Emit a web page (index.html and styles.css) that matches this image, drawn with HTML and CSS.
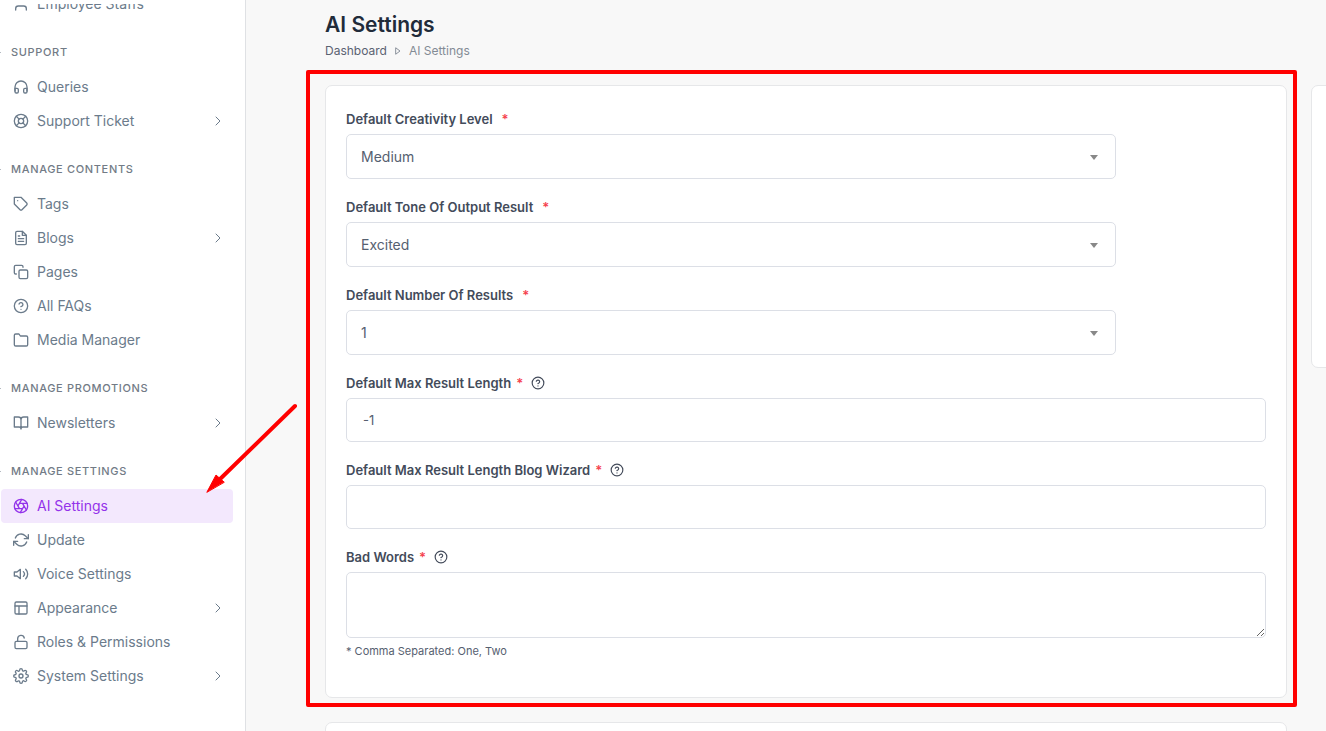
FILE: index.html
```html
<!DOCTYPE html>
<html lang="en">
<head>
<meta charset="utf-8">
<meta name="viewport" content="width=device-width, initial-scale=1">
<title>AI Settings</title>
<link rel="stylesheet" href="styles.css">
</head>
<body>
<svg class="sprite" aria-hidden="true">
  <symbol id="user" viewBox="0 0 24 24"><path d="M20 21v-2a4 4 0 0 0-4-4H8a4 4 0 0 0-4 4v2"/><circle cx="12" cy="7" r="4"/></symbol>
  <symbol id="headphones" viewBox="0 0 24 24"><path d="M3 18v-6a9 9 0 0 1 18 0v6"/><path d="M21 19a2 2 0 0 1-2 2h-1a2 2 0 0 1-2-2v-3a2 2 0 0 1 2-2h3zM3 19a2 2 0 0 0 2 2h1a2 2 0 0 0 2-2v-3a2 2 0 0 0-2-2H3z"/></symbol>
  <symbol id="life-buoy" viewBox="0 0 24 24"><circle cx="12" cy="12" r="10"/><circle cx="12" cy="12" r="4"/><path d="M4.93 4.93l4.24 4.24M14.83 14.83l4.24 4.24M14.83 9.17l4.24-4.24M4.93 19.07l4.24-4.24"/></symbol>
  <symbol id="tag" viewBox="0 0 24 24"><path d="M20.59 13.41l-7.17 7.17a2 2 0 0 1-2.83 0L2 12V2h10l8.59 8.59a2 2 0 0 1 0 2.82z"/><path d="M7 7h.01"/></symbol>
  <symbol id="file-text" viewBox="0 0 24 24"><path d="M14 2H6a2 2 0 0 0-2 2v16a2 2 0 0 0 2 2h12a2 2 0 0 0 2-2V8z"/><path d="M14 2v6h6M16 13H8M16 17H8M10 9H8"/></symbol>
  <symbol id="copy" viewBox="0 0 24 24"><rect x="9" y="9" width="13" height="13" rx="2"/><path d="M5 15H4a2 2 0 0 1-2-2V4a2 2 0 0 1 2-2h9a2 2 0 0 1 2 2v1"/></symbol>
  <symbol id="help" viewBox="0 0 24 24"><circle cx="12" cy="12" r="10"/><path d="M9.09 9a3 3 0 0 1 5.83 1c0 2-3 3-3 3M12 17h.01"/></symbol>
  <symbol id="folder" viewBox="0 0 24 24"><path d="M22 19a2 2 0 0 1-2 2H4a2 2 0 0 1-2-2V5a2 2 0 0 1 2-2h5l2 3h9a2 2 0 0 1 2 2z"/></symbol>
  <symbol id="book-open" viewBox="0 0 24 24"><path d="M2 3h6a4 4 0 0 1 4 4v14a3 3 0 0 0-3-3H2zM22 3h-6a4 4 0 0 0-4 4v14a3 3 0 0 1 3-3h7z"/></symbol>
  <symbol id="aperture" viewBox="0 0 24 24"><circle cx="12" cy="12" r="10"/><path d="M14.31 8l5.74 9.94M9.69 8h11.48M7.38 12l5.74-9.94M9.69 16L3.95 6.06M14.31 16H2.83M16.62 12l-5.74 9.94"/></symbol>
  <symbol id="refresh" viewBox="0 0 24 24"><path d="M23 4v6h-6M1 20v-6h6"/><path d="M3.51 9a9 9 0 0 1 14.85-3.36L23 10M1 14l4.64 4.36A9 9 0 0 0 20.49 15"/></symbol>
  <symbol id="volume" viewBox="0 0 24 24"><path d="M11 5L6 9H2v6h4l5 4z"/><path d="M19.07 4.93a10 10 0 0 1 0 14.14M15.54 8.46a5 5 0 0 1 0 7.07"/></symbol>
  <symbol id="layout" viewBox="0 0 24 24"><rect x="3" y="3" width="18" height="18" rx="2"/><path d="M3 9h18M9 21V9"/></symbol>
  <symbol id="unlock" viewBox="0 0 24 24"><rect x="3" y="11" width="18" height="11" rx="2"/><path d="M7 11V7a5 5 0 0 1 9.9-1"/></symbol>
  <symbol id="settings" viewBox="0 0 24 24"><circle cx="12" cy="12" r="3"/><path d="M19.4 15a1.65 1.65 0 0 0 .33 1.82l.06.06a2 2 0 0 1-2.83 2.83l-.06-.06a1.65 1.65 0 0 0-1.82-.33 1.65 1.65 0 0 0-1 1.51V21a2 2 0 0 1-4 0v-.09A1.65 1.65 0 0 0 9 19.4a1.65 1.65 0 0 0-1.82.33l-.06.06a2 2 0 0 1-2.83-2.83l.06-.06a1.65 1.65 0 0 0 .33-1.82 1.65 1.65 0 0 0-1.51-1H3a2 2 0 0 1 0-4h.09A1.65 1.65 0 0 0 4.6 9a1.65 1.65 0 0 0-.33-1.82l-.06-.06a2 2 0 0 1 2.83-2.83l.06.06a1.65 1.65 0 0 0 1.82.33H9a1.65 1.65 0 0 0 1-1.51V3a2 2 0 0 1 4 0v.09a1.65 1.65 0 0 0 1 1.51 1.65 1.65 0 0 0 1.82-.33l.06-.06a2 2 0 0 1 2.83 2.83l-.06.06a1.65 1.65 0 0 0-.33 1.82V9a1.65 1.65 0 0 0 1.51 1H21a2 2 0 0 1 0 4h-.09a1.65 1.65 0 0 0-1.51 1z"/></symbol>
  <symbol id="chevron" viewBox="0 0 24 24"><path d="M8 4l8 8-8 8"/></symbol>
</svg>

<div class="shell">
  <aside class="sidebar">
    <nav class="nav" aria-label="Main">
      <div class="nav-list">
        <a class="nav-item" href="#"><svg class="icon"><use href="#user"/></svg><span class="nav-text">Employee Staffs</span></a>

        <h2 class="nav-heading">SUPPORT</h2>
        <a class="nav-item" href="#"><svg class="icon"><use href="#headphones"/></svg><span class="nav-text">Queries</span></a>
        <a class="nav-item" href="#"><svg class="icon"><use href="#life-buoy"/></svg><span class="nav-text">Support Ticket</span><svg class="chevron"><use href="#chevron"/></svg></a>

        <h2 class="nav-heading">MANAGE CONTENTS</h2>
        <a class="nav-item" href="#"><svg class="icon"><use href="#tag"/></svg><span class="nav-text">Tags</span></a>
        <a class="nav-item" href="#"><svg class="icon"><use href="#file-text"/></svg><span class="nav-text">Blogs</span><svg class="chevron"><use href="#chevron"/></svg></a>
        <a class="nav-item" href="#"><svg class="icon"><use href="#copy"/></svg><span class="nav-text">Pages</span></a>
        <a class="nav-item" href="#"><svg class="icon"><use href="#help"/></svg><span class="nav-text">All FAQs</span></a>
        <a class="nav-item" href="#"><svg class="icon"><use href="#folder"/></svg><span class="nav-text">Media Manager</span></a>

        <h2 class="nav-heading">MANAGE PROMOTIONS</h2>
        <a class="nav-item" href="#"><svg class="icon"><use href="#book-open"/></svg><span class="nav-text">Newsletters</span><svg class="chevron"><use href="#chevron"/></svg></a>

        <h2 class="nav-heading">MANAGE SETTINGS</h2>
        <a class="nav-item nav-item-active" href="#" aria-current="page"><svg class="icon"><use href="#aperture"/></svg><span class="nav-text">AI Settings</span></a>
        <a class="nav-item" href="#"><svg class="icon"><use href="#refresh"/></svg><span class="nav-text">Update</span></a>
        <a class="nav-item" href="#"><svg class="icon"><use href="#volume"/></svg><span class="nav-text">Voice Settings</span></a>
        <a class="nav-item" href="#"><svg class="icon"><use href="#layout"/></svg><span class="nav-text">Appearance</span><svg class="chevron"><use href="#chevron"/></svg></a>
        <a class="nav-item" href="#"><svg class="icon"><use href="#unlock"/></svg><span class="nav-text">Roles &amp; Permissions</span></a>
        <a class="nav-item" href="#"><svg class="icon"><use href="#settings"/></svg><span class="nav-text">System Settings</span><svg class="chevron"><use href="#chevron"/></svg></a>
      </div>
    </nav>
  </aside>

  <main class="main">
    <header class="page-header">
      <h1 class="page-title">AI Settings</h1>
      <nav class="breadcrumb" aria-label="Breadcrumb">
        <a class="breadcrumb-link" href="#">Dashboard</a>
        <svg class="breadcrumb-sep" viewBox="0 0 6 8"><path d="M1 1l4 3-4 3z"/></svg>
        <span class="breadcrumb-current">AI Settings</span>
      </nav>
    </header>

    <div class="columns">
      <div class="column">
        <div class="highlighted">
          <form class="card form">
            <div class="field">
              <label class="label" for="creativity">Default Creativity Level <span class="required required-wide">*</span></label>
              <div class="select-wrap">
                <select class="control select" id="creativity"><option>Medium</option></select>
              </div>
            </div>
            <div class="field">
              <label class="label" for="tone">Default Tone Of Output Result <span class="required required-wide">*</span></label>
              <div class="select-wrap">
                <select class="control select" id="tone"><option>Excited</option></select>
              </div>
            </div>
            <div class="field">
              <label class="label" for="results">Default Number Of Results <span class="required required-wide">*</span></label>
              <div class="select-wrap">
                <select class="control select" id="results"><option>1</option></select>
              </div>
            </div>
            <div class="field">
              <label class="label" for="max-length">Default Max Result Length <span class="required">*</span><svg class="help-icon"><use href="#help"/></svg></label>
              <input class="control input" id="max-length" type="text" value="-1">
            </div>
            <div class="field">
              <label class="label" for="max-blog">Default Max Result Length Blog Wizard <span class="required">*</span><svg class="help-icon"><use href="#help"/></svg></label>
              <input class="control input" id="max-blog" type="text">
            </div>
            <div class="field">
              <label class="label" for="bad-words">Bad Words <span class="required">*</span><svg class="help-icon"><use href="#help"/></svg></label>
              <textarea class="control textarea" id="bad-words" aria-describedby="bad-words-hint"></textarea>
              <small class="hint" id="bad-words-hint">* Comma Separated: One, Two</small>
            </div>
          </form>
          <div class="marker-frame"></div>
        </div>
        <section class="card card-next"></section>
      </div>
      <aside class="card card-side"></aside>
    </div>
  </main>

  <svg class="marker-arrow" viewBox="0 0 100 96" aria-hidden="true">
    <path class="marker-line" d="M95 6L16 83"/>
    <path class="marker-head" d="M7 92L16 75L24 82Z"/>
  </svg>
</div>
</body>
</html>
```
FILE: styles.css
```css
* {
  box-sizing: border-box;
}

body {
  margin: 0;
  font-family: Inter, "Liberation Sans", sans-serif;
  font-size: 14px;
  color: #434b5a;
  background: #f8f8f8;
}

.sprite {
  display: none;
}

svg {
  fill: none;
  stroke: currentColor;
  stroke-width: 2;
  stroke-linecap: round;
  stroke-linejoin: round;
}

.shell {
  position: relative;
  display: flex;
  height: 100vh;
  overflow: hidden;
}

/* Sidebar */
.sidebar {
  flex: none;
  width: 246px;
  padding-top: 4px;
  background: #fff;
  border-right: 1px solid #dfe1e4;
}

.nav {
  height: 100%;
  overflow: hidden;
}

/* The list is scrolled so that its first entry is partly hidden. */
.nav-list {
  margin-top: -17px;
}

.nav-item {
  display: flex;
  align-items: center;
  gap: 8px;
  height: 34px;
  margin: 0 12px 0 1px;
  padding: 0 9px 0 12px;
  border-radius: 4px;
  color: #6b7b8b;
  font-size: 14px;
  text-decoration: none;
}

.nav-text {
  padding-bottom: 2px;
}

.nav-item-active {
  color: #9333ea;
  background: #f3e8fd;
}

.icon {
  flex: none;
  width: 16px;
  height: 16px;
}

.chevron {
  width: 12px;
  height: 12px;
  margin-left: auto;
}

.nav-heading {
  display: flex;
  align-items: center;
  gap: 10px;
  margin: 0;
  padding: 23px 0 10px;
  color: #727b86;
  font-size: 11px;
  font-weight: 500;
  line-height: 16px;
  letter-spacing: 0.06em;
}

.nav-heading::before {
  content: "";
  width: 1px;
  height: 1px;
  background: #b4bac1;
}

/* Page */
.main {
  flex: 1;
  min-width: 0;
  padding: 12px 0 0 79px;
  overflow: hidden;
}

.page-header {
  margin-bottom: 25px;
}

.page-title {
  margin: 0 0 4px;
  color: #212b3a;
  font-size: 21px;
  font-weight: 600;
  line-height: 26px;
}

.breadcrumb {
  display: flex;
  align-items: center;
  gap: 8px;
  font-size: 12px;
  line-height: 18px;
}

.breadcrumb-link {
  color: #5a6272;
  text-decoration: none;
}

.breadcrumb-sep {
  width: 6px;
  height: 8px;
  color: #8a919b;
  stroke-width: 1;
}

.breadcrumb-current {
  color: #838b95;
}

/* The side column runs past the right edge of the window. */
.columns {
  display: grid;
  grid-template-columns: minmax(0, 1fr) 320px;
  align-items: start;
  gap: 24px;
  margin-right: -305px;
}

.column {
  display: grid;
  gap: 24px;
}

.card {
  background: #fff;
  border: 1px solid #e6e7e9;
  border-radius: 7px;
}

.card-side {
  min-height: 283px;
}

.card-next {
  min-height: 200px;
}

.highlighted {
  position: relative;
}

.form {
  display: grid;
  gap: 18px;
  padding: 23px 20px 38px;
}

.field {
  display: grid;
  gap: 5px;
}

.label {
  display: flex;
  align-items: center;
  font-size: 13px;
  font-weight: 600;
  line-height: 20px;
}

.required {
  margin-left: 5px;
  color: #f5424e;
}

.required-wide {
  margin-left: 9px;
}

.help-icon {
  width: 14px;
  height: 14px;
  margin-left: 8px;
}

.control {
  display: block;
  width: 100%;
  margin: 0;
  border: 1px solid #dcdfe6;
  border-radius: 5px;
  background: #fff;
  color: #566070;
  font-family: inherit;
  font-size: 14px;
}

.select-wrap {
  position: relative;
  width: calc(100% - 150px);
}

.select-wrap::after {
  content: "";
  position: absolute;
  top: 21px;
  right: 18px;
  border: 4px solid transparent;
  border-top: 5px solid #888;
  border-bottom: 0;
  pointer-events: none;
}

.select {
  height: 45px;
  padding: 0 14px;
  appearance: none;
}

.input {
  height: 44px;
  padding: 0 16px;
  font-size: 13px;
}

.textarea {
  height: 66px;
  padding: 12px 16px;
  resize: vertical;
}

.hint {
  color: #566070;
  font-size: 11px;
  line-height: 16px;
}

/* Red callouts drawn over the page */
.marker-frame {
  position: absolute;
  inset: -15px -10px -9px -19px;
  border: 4px solid #f00;
  border-radius: 2px;
  pointer-events: none;
}

.marker-arrow {
  position: absolute;
  top: 400px;
  left: 200px;
  width: 100px;
  height: 96px;
  pointer-events: none;
}

.marker-line {
  stroke: #f00;
  stroke-width: 4;
}

.marker-head {
  fill: #f00;
  stroke: #f00;
  stroke-width: 1;
}
```
